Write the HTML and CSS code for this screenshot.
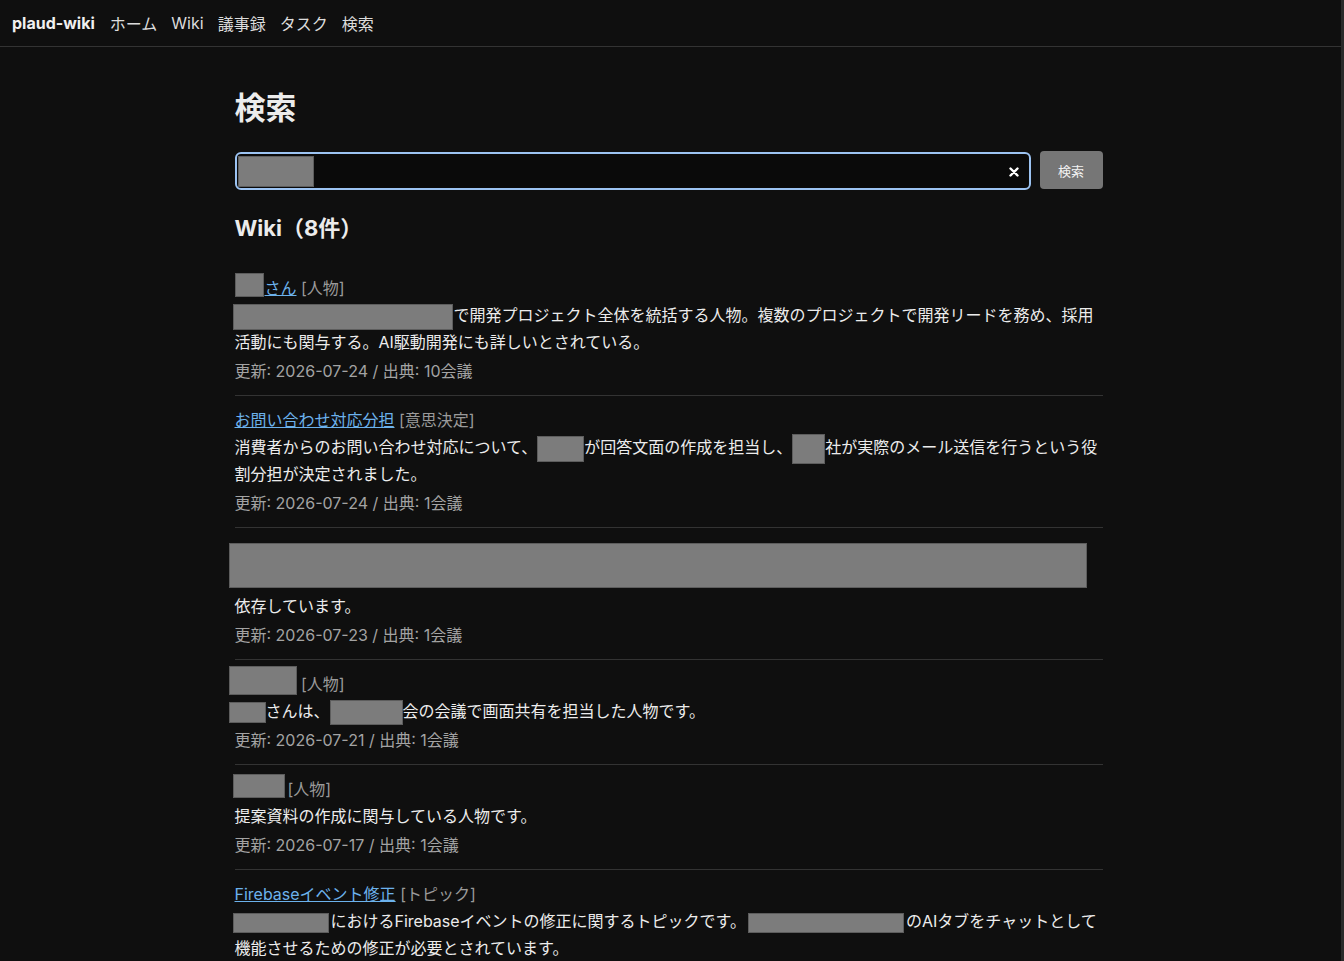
FILE: index.html
```html
<!DOCTYPE html>
<html lang="ja">

<head>
  <meta charset="UTF-8" />
  <title>検索 - plaud-wiki</title>
  <link rel="stylesheet" href="styles.css">
</head>
<body>

  <nav class="topnav">
    <a class="brand" href="#">plaud-wiki</a>
    <a href="#">ホーム</a>
    <a href="#">Wiki</a>
    <a href="#">議事録</a>
    <a href="#">タスク</a>
    <a href="#">検索</a>
  </nav>

  <main class="page">
    <h1>検索</h1>

    <form class="search">
      <div class="search-box">
        <span class="redact q"></span>
        <span class="clear">
          <svg width="10" height="10" viewBox="0 0 10 10"><path d="M1.5 1.5 L8.5 8.5 M8.5 1.5 L1.5 8.5" stroke="#fff" stroke-width="2.4" stroke-linecap="round"/></svg>
        </span>
      </div>
      <button type="button">検索</button>
    </form>

    <h2>Wiki（8件）</h2>

    <div class="results">
      <div class="item">
        <div class="title"><a href="#"><span class="redact t1"></span>さん</a> <span class="tag">[人物]</span></div>
        <p class="desc"><span class="redact d1"></span>で開発プロジェクト全体を統括する人物。複数のプロジェクトで開発リードを務め、採用活動にも関与する。AI駆動開発にも詳しいとされている。</p>
        <div class="meta">更新: 2026-07-24 / 出典: 10会議</div>
      </div>

      <div class="item">
        <div class="title"><a href="#">お問い合わせ対応分担</a> <span class="tag">[意思決定]</span></div>
        <p class="desc">消費者からのお問い合わせ対応について、<span class="redact d2a"></span>が回答文面の作成を担当し、<span class="redact d2b"></span>社が実際のメール送信を行うという役割分担が決定されました。</p>
        <div class="meta">更新: 2026-07-24 / 出典: 1会議</div>
      </div>

      <div class="item">
        <div class="redact wide"></div>
        <p class="desc">依存しています。</p>
        <div class="meta">更新: 2026-07-23 / 出典: 1会議</div>
      </div>

      <div class="item">
        <div class="title"><span class="redact t4"></span> <span class="tag">[人物]</span></div>
        <p class="desc"><span class="redact d4a"></span>さんは、<span class="redact d4b"></span>会の会議で画面共有を担当した人物です。</p>
        <div class="meta">更新: 2026-07-21 / 出典: 1会議</div>
      </div>

      <div class="item">
        <div class="title"><span class="redact t5"></span><span class="tag">[人物]</span></div>
        <p class="desc">提案資料の作成に関与している人物です。</p>
        <div class="meta">更新: 2026-07-17 / 出典: 1会議</div>
      </div>

      <div class="item">
        <div class="title"><a href="#">Firebaseイベント修正</a> <span class="tag">[トピック]</span></div>
        <p class="desc"><span class="redact d6a"></span>におけるFirebaseイベントの修正に関するトピックです。<span class="redact d6b"></span>のAIタブをチャットとして機能させるための修正が必要とされています。</p>
        <div class="meta">更新: 2026-07-17 / 出典: 1会議</div>
      </div>
    </div>
  </main>

</body>
</html>
```

FILE: styles.css
```css
body {
  margin: 0;
  min-height: 100vh;
  background: #0f0f0f;
  color: #ececec;
  font-family: Inter, "Noto Sans CJK JP", sans-serif;
  font-size: 16px;
  border-right: 3px solid #2a2a2a;
}
a {
  color: #6cb2ec;
}

/* top bar */
.topnav {
  display: flex;
  align-items: center;
  gap: 14px;
  height: 46px;
  padding: 0 12px;
  border-bottom: 1px solid #333;
}
.topnav a {
  color: #dcdcdc;
  text-decoration: none;
  font-size: 16px;
}
.topnav .brand {
  color: #f0f0f0;
  font-weight: 700;
  margin-right: 1px;
}

.page {
  width: 868px;
  margin: 0 auto;
  padding: 42px 4px 40px 0;
}
h1 {
  margin: 0 0 24px;
  font-size: 31px;
  line-height: 38px;
  font-weight: 700;
}
h2 {
  margin: 0 0 22px;
  font-size: 22px;
  line-height: 28px;
  font-weight: 700;
}

/* search form */
.search {
  display: flex;
  align-items: flex-start;
  gap: 9px;
  margin-bottom: 24px;
}
.search-box {
  flex: 1;
  display: flex;
  align-items: center;
  justify-content: space-between;
  height: 34px;
  margin-top: 1px;
  padding: 0 10px 0 1px;
  border: 2px solid #9cc3f2;
  border-radius: 6px;
  background: #0a0a0a;
}
.clear {
  display: flex;
  margin-top: 1px;
}
.search button {
  width: 63px;
  height: 38px;
  border: none;
  border-radius: 4px;
  background: #767676;
  color: #f2f2f2;
  font-family: inherit;
  font-size: 13px;
}

/* redaction boxes */
.redact {
  display: inline-block;
  vertical-align: middle;
  background: #7c7c7c;
  box-shadow: inset 0 0 0 1px rgba(0, 0, 0, 0.25);
}
.q { width: 76px; height: 31px; }
.t1 { width: 29px; height: 24px; margin: -9px 1px 1px 0; }
.d1 { width: 220px; height: 26px; margin: -2px 1px -2px -2px; }
.d2a { width: 47px; height: 26px; margin: -2px 0; }
.d2b { width: 33px; height: 30px; margin: -4px 0; }
.wide { display: block; width: 858px; height: 45px; margin: 4px 0 5px -6px; }
.t4 { width: 68px; height: 29px; margin: -9px 0 2px -6px; }
.d4a { width: 37px; height: 21px; margin-left: -6px; }
.d4b { width: 73px; height: 25px; margin: -2px 0; }
.t5 { width: 52px; height: 24px; margin: -9px 3px 1px -2px; }
.d6a { width: 96px; height: 20px; margin: 0 2px 0 -2px; }
.d6b { width: 156px; height: 20px; margin: 0 2px; }

/* result list */
.item {
  padding: 11px 0 10px;
  border-bottom: 1px solid #333;
}
.title,
.desc,
.meta {
  line-height: 27px;
}
.desc {
  margin: 0;
}
.tag {
  color: #9a9a9a;
}
.meta {
  margin-top: 2px;
  color: #a3a3a3;
}
```
